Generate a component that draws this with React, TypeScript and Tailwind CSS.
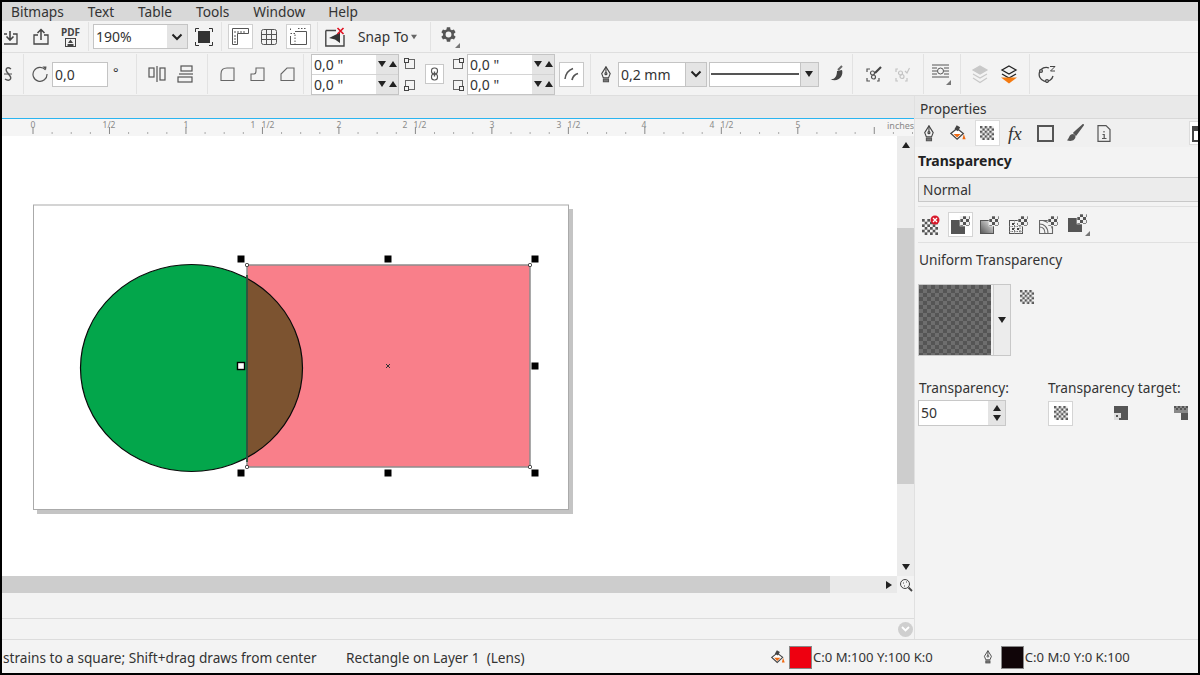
import React from 'react';

const Tri = ({ dir = 'down', size = 8, color = '#222' }: { dir?: 'down' | 'up' | 'right'; size?: number; color?: string }) => {
  const pts = dir === 'down' ? '0,1 8,1 4,7' : dir === 'up' ? '0,7 8,7 4,1' : '1,0 7,4 1,8';
  return (
    <svg width={size} height={size} viewBox="0 0 8 8" className="shrink-0">
      <polygon points={pts} fill={color} />
    </svg>
  );
};

const Chevron = () => (
  <svg width="12" height="8" viewBox="0 0 12 8" className="shrink-0">
    <path d="M1.5 1.5 L6 6 L10.5 1.5" fill="none" stroke="#222" strokeWidth="2" />
  </svg>
);

const Corner = () => (
  <svg width="5" height="5" viewBox="0 0 5 5" className="absolute right-0 bottom-0">
    <polygon points="5,0 5,5 0,5" fill="#777" />
  </svg>
);

const Sep = ({ ml }: { ml: string }) => <div className={`w-px self-stretch my-[1px] bg-[#e2e2e2] shrink-0 ${ml}`} />;

const Pen = ({ size = 18 }: { size?: number }) => (
  <svg width={size * 0.7} height={size} viewBox="0 0 14 20" className="shrink-0" fill="none" stroke="#444" strokeWidth="1.3">
    <path d="M7 1 L12 9 L10 14 H4 L2 9 Z" />
    <path d="M7 1 V8" />
    <circle cx="7" cy="9" r="1.2" />
    <rect x="4" y="15.5" width="6" height="3" fill="#777" stroke="#555" />
  </svg>
);

const Bucket = ({ size = 18 }: { size?: number }) => (
  <svg width={size} height={size} viewBox="0 0 18 18" className="shrink-0">
    <path d="M8 4 L15 9.500 L8 16 L1 9.500 Z" fill="#fff" stroke="#444" strokeWidth="1.4" />
    <path d="M4 10 H12 L8 14 Z" fill="#ef6a12" />
    <rect x="6" y="1" width="4.500" height="5" fill="#444" transform="rotate(30 8 3.500)" />
    <path d="M15.500 10 L17.600 16 H14 Z" fill="#ef6a12" />
  </svg>
);

const Checker = ({ size = 16, id }: { size?: number; id: string }) => (
  <svg width={size} height={size} viewBox="0 0 16 16" className="shrink-0">
    <defs>
      <pattern id={id} width="5.340" height="5.340" patternUnits="userSpaceOnUse">
        <rect width="5.340" height="5.340" fill="#f4f4f4" />
        <rect width="2.670" height="2.670" fill="#555" />
        <rect x="2.670" y="2.670" width="2.670" height="2.670" fill="#555" />
      </pattern>
    </defs>
    <rect width="16" height="16" fill="#666" />
    <rect width="16" height="16" fill={`url(#${id})`} />
  </svg>
);

// small "type of transparency" glyph: a filled block plus a checker corner
const TransType = ({ kind, id }: { kind: 'flat' | 'grad' | 'dots' | 'wave'; id: string }) => (
  <svg width="19" height="18" viewBox="0 0 19 18" className="shrink-0">
    <defs>
      <pattern id={id} width="6" height="6" patternUnits="userSpaceOnUse">
        <rect width="6" height="6" fill="#eee" />
        <rect width="3" height="3" fill="#555" />
        <rect x="3" y="3" width="3" height="3" fill="#555" />
      </pattern>
      <linearGradient id={`${id}-g`} x1="0" y1="1" x2="1" y2="0">
        <stop offset="0" stopColor="#555" />
        <stop offset="1" stopColor="#eee" />
      </linearGradient>
    </defs>
    {kind === 'flat' && <rect x="0" y="4" width="14" height="14" fill="#555" />}
    {kind === 'grad' && <rect x="0.500" y="4.500" width="13" height="13" fill={`url(#${id}-g)`} stroke="#555" />}
    {kind === 'dots' && (
      <g>
        <rect x="0.500" y="4.500" width="13" height="13" fill="#f3f3f3" stroke="#555" />
        <path d="M3 7 h2 v2 h-2z M8 7 h2 v2 h-2z M3 12 h2 v2 h-2z M8 12 h2 v2 h-2z" fill="#444" />
        <path d="M0 10.500 H14 M0 15.500 H14 M5.500 4 V18 M11 4 V18" stroke="#777" strokeWidth="1" strokeDasharray="1.500 1" />
      </g>
    )}
    {kind === 'wave' && (
      <g fill="none" stroke="#666" strokeWidth="1.100">
        <path d="M0.500 17.500 V4.500 H13.500 V17.500 Z" />
        <path d="M0.500 8 C5 8 9 11 9 17.500 M0.500 11 C3.500 11 6 13 6 17.500 M4 4.500 C9 6 13 9 13.500 13" />
      </g>
    )}
    <rect x="9" y="0" width="10" height="10" fill={`url(#${id})`} stroke="#f4f4f4" strokeWidth="0.6" />
  </svg>
);

const SpinPair = ({ ml }: { ml: string }) => (
  <div className={`w-[88px] h-[41px] border border-[#c4c4c4] flex flex-col shrink-0 ${ml}`}>
    {[0, 1].map((i) => (
      <div key={i} className={`flex h-1/2 ${i === 1 ? 'border-t border-[#d4d4d4]' : ''}`}>
        <div className="w-[64px] bg-white pl-[2px] text-[14px] leading-[19px]">0,0 "</div>
        <div className="flex-1 bg-[#e4e4e4] flex items-center justify-center gap-[3px]">
          <Tri dir="down" />
          <Tri dir="up" />
        </div>
      </div>
    ))}
  </div>
);

const SmallCornerBox = ({ pos }: { pos: 'tl' | 'tr' | 'bl' | 'br' }) => {
  const d = { tl: [0.5, 0.5], tr: [7.5, 0.5], bl: [0.5, 7.5], br: [7.5, 7.5] }[pos];
  return (
    <svg width="12" height="12" viewBox="0 0 12 12" className="shrink-0">
      <rect x="1.5" y="1.5" width="9" height="9" fill="none" stroke="#666" />
      <rect x={d[0]} y={d[1]} width="4" height="4" fill="#f3f3f3" stroke="#444" />
    </svg>
  );
};

const Ruler = () => {
  const ticks: number[] = [];
  for (let i = 0; i <= 47; i++) ticks.push(33 + i * 19.12);
  const labels: [string, number][] = [['0', 33], ['1/2', 109], ['1', 186], ['1', 253], ['1/2', 268], ['2', 339], ['2', 405], ['1/2', 420], ['3', 492], ['3', 559], ['1/2', 574], ['4', 644], ['4', 712], ['1/2', 727], ['5', 798]];
  return (
    <svg width="912" height="17" viewBox="2 119 912 17" className="block">
      <rect x="2" y="119" width="912" height="17" fill="#f5f5f5" />
      {ticks.map((x, i) => (
        <line key={i} x1={x} x2={x} y1={i % 4 === 0 ? 127 : 132} y2="134" stroke={i % 4 === 0 ? '#888' : '#aaa'} strokeWidth="1" />
      ))}
      {labels.map(([t, x], i) => (
        <text key={i} x={x} y="128" textAnchor="middle" fontSize="8.5" fill="#8a8a8a" fontFamily="Noto Sans, sans-serif">{t}</text>
      ))}
      <text x="887" y="129" fontSize="9" fill="#8a8a8a" fontFamily="Noto Sans, sans-serif">inches</text>
    </svg>
  );
};

const Drawing = () => {
  const squares: [number, number][] = [[241, 259], [388, 259], [535, 259], [241, 473], [388, 473], [535, 473], [535, 366]];
  const corners: [number, number][] = [[247, 265], [530, 265], [247, 467], [530, 467]];
  return (
    <svg width="895" height="440" viewBox="2 136 895 440" className="block">
      <defs>
        <clipPath id="circ"><ellipse cx="191.5" cy="368" rx="111" ry="103.5" /></clipPath>
      </defs>
      <rect x="37" y="209" width="536" height="305" fill="#c4c4c4" />
      <rect x="33.5" y="205" width="535" height="304.500" fill="#fff" stroke="#aaa" />
      <ellipse cx="191.5" cy="368" rx="111" ry="103.5" fill="#03a64b" />
      <rect x="247" y="265" width="283" height="202" fill="#f97f8a" />
      <rect x="247" y="265" width="283" height="202" fill="#7c5330" clipPath="url(#circ)" />
      <ellipse cx="191.5" cy="368" rx="111" ry="103.5" fill="none" stroke="#0a0a0a" strokeWidth="1.2" />
      <rect x="247" y="265" width="283" height="202" fill="none" stroke="#8d8d8d" strokeWidth="1.5" />
      <line x1="247" x2="247" y1="275" y2="462" stroke="#14462c" strokeWidth="1.5" />
      {squares.map(([x, y], i) => <rect key={i} x={x - 3.5} y={y - 3.5} width="7" height="7" fill="#000" />)}
      <rect x="237.5" y="362.5" width="7" height="7" fill="#fff" stroke="#000" strokeWidth="1.400" />
      {corners.map(([x, y], i) => <rect key={i} x={x - 1.500} y={y - 1.500} width="3" height="3" rx="1" fill="#fff" stroke="#222" />)}
      <path d="M386 364 L390 368 M390 364 L386 368" stroke="#333" strokeWidth="1" />
    </svg>
  );
};

export default function App() {
  return (
    <div className="w-[1200px] h-[675px] overflow-hidden border-2 border-black bg-[#f3f3f3] text-[#333] font-['Noto_Sans',sans-serif] flex flex-col text-[13.7px]">
      {/* Menu */}
      <div className="h-[19px] bg-[#d8d8d8] flex items-center shrink-0 leading-[19px]">
        <span className="ml-[9px]">Bitmaps</span>
        <span className="ml-[24px]">Text</span>
        <span className="ml-[24px]">Table</span>
        <span className="ml-[24px]">Tools</span>
        <span className="ml-[24px]">Window</span>
        <span className="ml-[23px]">Help</span>
      </div>

      {/* Standard toolbar */}
      <div className="h-[32px] flex items-center shrink-0 border-b border-[#dedede]">
        <svg width="15" height="16" viewBox="2 0 15 16" className="ml-[2px] shrink-0" fill="none" stroke="#444" strokeWidth="1.3">
          <path d="M5 5 H1 V15 H15 V5 H11" />
          <path d="M8 2 V11 M4.5 7.5 L8 11 L11.5 7.5" strokeWidth="1.6" />
        </svg>
        <svg width="16" height="17" viewBox="0 0 16 17" className="ml-[14px] shrink-0" fill="none" stroke="#444" strokeWidth="1.3">
          <path d="M5 7 H1 V16 H15 V7 H11" />
          <path d="M8 12 V2 M4.5 5 L8 1.5 L11.5 5" strokeWidth="1.5" />
        </svg>
        <div className="ml-[12px] w-[19px] flex flex-col items-center shrink-0 leading-none">
          <span className="text-[10px] font-bold leading-[10px] text-[#444]">PDF</span>
          <svg width="11" height="9" viewBox="0 0 11 9" className="mt-[1px]">
            <rect x="0.5" y="0.5" width="10" height="8" fill="none" stroke="#444" />
            <path d="M5.5 1.5 L8 5 H3 Z M2.5 6 H8.5 V8 H2.5 Z" fill="#444" />
          </svg>
        </div>
        <Sep ml="ml-[8px]" />
        <div className="ml-[4px] w-[95px] h-[25px] border border-[#c4c4c4] flex shrink-0">
          <div className="w-[73px] bg-white pl-[2px] leading-[23px] text-[14px]">190%</div>
          <div className="flex-1 bg-[#e4e4e4] flex items-center justify-center"><Chevron /></div>
        </div>
        <svg width="18" height="18" viewBox="0 0 18 18" className="ml-[7px] shrink-0">
          <rect x="3" y="3" width="12" height="12" fill="#333" />
          <path d="M0.5 4 V0.5 H4 M14 0.5 H17.5 V4 M17.5 14 V17.5 H14 M4 17.5 H0.5 V14" fill="none" stroke="#333" />
        </svg>
        <Sep ml="ml-[8px]" />
        <div className="ml-[6px] w-[25px] h-[25px] bg-white border border-[#d0d0d0] flex items-center justify-center shrink-0">
          <svg width="17" height="17" viewBox="0 0 17 17" fill="none" stroke="#555">
            <path d="M0.5 0.5 H16.5 V5.5 H5.5 V16.5 H0.5 Z" />
            <path d="M3 3 V5 M6 3 V5 M9 3 V5 M12 3 V5 M2 8 H4 M2 11 H4 M2 14 H4" />
          </svg>
        </div>
        <svg width="16" height="16" viewBox="0 0 16 16" className="ml-[8px] shrink-0" fill="none" stroke="#555">
          <rect x="0.5" y="0.5" width="15" height="15" rx="2" />
          <path d="M5.5 0.5 V15.5 M10.5 0.5 V15.5 M0.5 5.5 H15.5 M0.5 10.5 H15.5" />
        </svg>
        <div className="ml-[9px] w-[25px] h-[25px] bg-white border border-[#d0d0d0] flex items-center justify-center shrink-0">
          <svg width="17" height="17" viewBox="0 0 17 17" fill="none" stroke="#555">
            <path d="M5 3.5 H16.5 V16.5 H0.5 V8" />
            <path d="M5 6.5 V16.5 M0.5 5.5 H5" strokeDasharray="1.5 1.5" />
            <path d="M0.5 0.5 V3 M8 0.5 H16" strokeDasharray="1.5 1.5" />
          </svg>
        </div>
        <Sep ml="ml-[6px]" />
        <svg width="20" height="20" viewBox="0 0 20 20" className="ml-[7px] shrink-0">
          <path d="M0.8 3.5 H11 M0.8 3.5 V19 H19 V8" fill="none" stroke="#444" strokeWidth="1.4" />
          <path d="M4 11 L15 5.5 V16 L10 12.5 Z" fill="#333" />
          <path d="M12.5 1 L18.5 7 M18.5 1 L12.5 7" stroke="#e01020" strokeWidth="1.6" />
        </svg>
        <span className="ml-[13px] mt-[1px] w-[50px] shrink-0 whitespace-nowrap">Snap To</span>
        <span className="ml-[3px] mt-[1px]"><Tri size={6} color="#666" /></span>
        <Sep ml="ml-[13px]" />
        <div className="ml-[10px] w-[19px] h-[22px] relative shrink-0">
          <svg width="15" height="15" viewBox="4 3 18 18" className="absolute left-0 top-[1px]">
            <path fill="#555" d="M19.4 13a7.5 7.5 0 0 0 0-2l2.1-1.6-2-3.5-2.5 1a7.5 7.5 0 0 0-1.7-1L15 3.2h-4l-.4 2.7a7.5 7.5 0 0 0-1.7 1l-2.5-1-2 3.500L6.500 11a7.5 7.5 0 0 0 0 2l-2.100 1.600 2 3.500 2.500-1c.5.4 1.100.7 1.700 1l.4 2.700h4l.4-2.700c.6-.3 1.200-.6 1.700-1l2.500 1 2-3.500zM13 15.500a3.500 3.500 0 1 1 0-7 3.500 3.500 0 0 1 0 7z" />
          </svg>
          <Corner />
        </div>
      </div>

      {/* Property bar */}
      <div className="h-[43px] flex items-center shrink-0 border-b border-[#dedede]">
        <svg width="8" height="16" viewBox="0 0 8 16" className="ml-[2px] shrink-0" fill="none" stroke="#555" strokeWidth="1.4">
          <path d="M7 3 C3 0 1 3 3 6 L6 10 C8 13 5 16 1 13" />
          <path d="M0 8 H8" strokeWidth="1" />
        </svg>
        <Sep ml="ml-[11px]" />
        <svg width="16" height="16" viewBox="0 0 16 16" className="ml-[8px] shrink-0" fill="none" stroke="#555" strokeWidth="1.2">
          <path d="M13.500 4 A7 7 0 1 0 15 8" />
          <path d="M10.500 0.500 L14 4 L14.500 0.500 Z" fill="#555" stroke="none" />
        </svg>
        <div className="ml-[4px] w-[56px] h-[25px] bg-white border border-[#c4c4c4] pl-[2px] leading-[23px] text-[14px] shrink-0">0,0</div>
        <span className="ml-[5px] w-[8px] text-[13px] leading-none mb-[4px] shrink-0">°</span>
        <Sep ml="ml-[15px]" />
        <svg width="18" height="16" viewBox="0 0 18 16" className="ml-[11px] shrink-0" fill="none" stroke="#555" strokeWidth="1.2">
          <path d="M9 0 V16" />
          <rect x="1" y="2" width="5" height="9" />
          <rect x="12" y="2" width="5" height="12" />
        </svg>
        <svg width="18" height="18" viewBox="0 0 18 18" className="ml-[11px] shrink-0" fill="none" stroke="#555" strokeWidth="1.200">
          <path d="M2 9 H16" />
          <rect x="4" y="1" width="11" height="5" />
          <rect x="1" y="12" width="14" height="5" />
        </svg>
        <Sep ml="ml-[12px]" />
        <svg width="15" height="14" viewBox="0 0 15 14" className="ml-[12px] shrink-0" fill="none" stroke="#666" strokeWidth="1.100">
          <path d="M1 13.500 V7 Q1 1 7 1 H14 V13.500 Z" />
        </svg>
        <svg width="15" height="14" viewBox="0 0 15 14" className="ml-[15px] shrink-0" fill="none" stroke="#666" strokeWidth="1.100">
          <path d="M1 13.500 V7 H4 Q6 7 6 4 V1 H14 V13.500 Z" />
        </svg>
        <svg width="15" height="14" viewBox="0 0 15 14" className="ml-[15px] shrink-0" fill="none" stroke="#666" strokeWidth="1.100">
          <path d="M1 13.500 V7 L7 1 H14 V13.500 Z" />
        </svg>
        <Sep ml="ml-[8px]" />
        <SpinPair ml="ml-[7px]" />
        <div className="ml-[5px] flex flex-col gap-[9px] shrink-0">
          <SmallCornerBox pos="tl" />
          <SmallCornerBox pos="bl" />
        </div>
        <div className="ml-[9px] w-[19px] h-[20px] bg-white border border-[#c8c8c8] flex items-center justify-center shrink-0">
          <svg width="9" height="14" viewBox="0 0 9 14" fill="none" stroke="#555" strokeWidth="1.100">
            <rect x="1.500" y="1" width="6" height="6" rx="2.700" />
            <rect x="1.500" y="7" width="6" height="6" rx="2.700" />
            <path d="M4.500 4.500 V9.500" strokeWidth="1.400" />
          </svg>
        </div>
        <div className="ml-[8px] flex flex-col gap-[9px] shrink-0">
          <SmallCornerBox pos="tr" />
          <SmallCornerBox pos="br" />
        </div>
        <SpinPair ml="ml-[3px]" />
        <div className="ml-[4px] w-[25px] h-[25px] bg-white border border-[#c8c8c8] flex items-center justify-center shrink-0">
          <svg width="16" height="14" viewBox="0 0 16 14" fill="none" stroke="#555" strokeWidth="1.500">
            <path d="M1 12 Q2 4 9 1.500" />
            <path d="M8 13 Q9 8 14 6.500" strokeWidth="1.800" />
          </svg>
        </div>
        <Sep ml="ml-[6px]" />
        <span className="ml-[9px] shrink-0 flex"><Pen size={17} /></span>
        <div className="ml-[6px] w-[89px] h-[25px] border border-[#c4c4c4] flex shrink-0">
          <div className="w-[66px] bg-white pl-[2px] leading-[23px] text-[14px]">0,2 mm</div>
          <div className="flex-1 bg-[#e4e4e4] border-l border-[#c4c4c4] flex items-center justify-center"><Chevron /></div>
        </div>
        <div className="ml-[2px] w-[110px] h-[25px] border border-[#c4c4c4] flex shrink-0">
          <div className="w-[90px] bg-white flex items-center px-[1px]"><div className="w-full h-[2px] bg-[#555]" /></div>
          <div className="flex-1 bg-[#e4e4e4] border-l border-[#c4c4c4] flex items-center justify-center"><Tri /></div>
        </div>
        <svg width="15" height="18" viewBox="0 0 15 18" className="ml-[10px] shrink-0">
          <path d="M1 14 C5 15 8 12 8 6 L13 5 C15 11 9 18 1 14 Z" fill="#444" />
          <path d="M9 5 L13 1" stroke="#666" strokeWidth="2" />
        </svg>
        <Sep ml="ml-[8px]" />
        <svg width="17" height="17" viewBox="0 0 17 17" className="ml-[13px] shrink-0" fill="none" stroke="#555" strokeWidth="1.200">
          <path d="M1 6 V3 H4 M1 12 V15 H4 M11 15 H13 V12" />
          <circle cx="6.500" cy="7" r="2" />
          <circle cx="7.500" cy="11" r="2" />
          <path d="M9 7 L15 1" stroke="#444" strokeWidth="2.200" />
        </svg>
        <svg width="15" height="15" viewBox="0 0 15 15" className="ml-[12px] shrink-0" fill="none" stroke="#c4c4c4" strokeWidth="1.200">
          <path d="M1 5 V2 H3 M1 11 V14 H3 M10 14 H12 V11" />
          <circle cx="5.500" cy="6" r="2" />
          <circle cx="7" cy="9.500" r="2" />
          <path d="M10 4 L12 6 L14.500 1" />
        </svg>
        <Sep ml="ml-[13px]" />
        <div className="ml-[8px] w-[19px] h-[22px] relative shrink-0">
          <svg width="17" height="14" viewBox="0 0 17 14" className="absolute left-0 top-[1px]" fill="none" stroke="#555">
            <path d="M0 1 H17 M0 4 H5 M0 7 H5 M0 10 H5 M12 4 H17 M12 7 H17 M12 10 H17 M0 13 H17" />
            <circle cx="8.500" cy="7" r="3" />
          </svg>
          <Corner />
        </div>
        <Sep ml="ml-[9px]" />
        <svg width="18" height="19" viewBox="0 0 18 19" className="ml-[10px] shrink-0" fill="none" stroke="#c8c8c8" strokeWidth="1.200">
          <path d="M9 1 L16 5 L9 9 L2 5 Z" fill="#c8c8c8" />
          <path d="M2 9 L9 13 L16 9 M2 13 L9 17.500 L16 13" />
        </svg>
        <svg width="18" height="19" viewBox="0 0 18 19" className="ml-[11px] shrink-0" fill="none" stroke="#222" strokeWidth="1.300">
          <path d="M9 1 L16 5 L9 9 L2 5 Z" />
          <path d="M2 9 L9 13 L16 9" />
          <path d="M1 12.500 H17 L9 18.500 Z" fill="#f47a10" stroke="none" />
        </svg>
        <Sep ml="ml-[11px]" />
        <svg width="18" height="18" viewBox="0 0 18 18" className="ml-[8px] shrink-0" fill="none" stroke="#444" strokeWidth="1.300">
          <path d="M11 3 A7 7 0 1 0 15 11" />
          <circle cx="3" cy="6" r="1.400" fill="#f3f3f3" />
          <circle cx="9" cy="16" r="1.400" fill="#f3f3f3" />
          <path d="M12 1.500 H17 L12.500 6 H17" strokeWidth="1" />
        </svg>
      </div>

      <div className="flex-1 flex min-h-0">
        {/* Workspace */}
        <div className="w-[912px] flex flex-col shrink-0">
          <div className="h-[22px] bg-[#e9e9e9] shrink-0" />
          <div className="h-px bg-[#2bb5f0] shrink-0" />
          <Ruler />
          <div className="h-[440px] flex shrink-0">
            <div className="w-[895px] bg-white shrink-0"><Drawing /></div>
            <div className="flex-1 bg-[#ececec] flex flex-col items-center">
              <div className="h-[92px] w-full flex justify-center pt-[5px]"><Tri dir="up" /></div>
              <div className="h-[256px] w-full bg-[#cdcdcd]" />
              <div className="flex-1 w-full flex items-end justify-center pb-[5px]"><Tri dir="down" /></div>
            </div>
          </div>
          <div className="h-[17px] flex shrink-0">
            <div className="w-[828px] bg-[#cdcdcd]" />
            <div className="w-[67px] bg-[#e9e9e9] flex items-center justify-end pr-[4px]"><Tri dir="right" /></div>
            <div className="flex-1 flex items-center justify-center">
              <svg width="14" height="14" viewBox="0 0 14 14" fill="none" stroke="#444">
                <circle cx="6" cy="6" r="4.500" />
                <path d="M9.500 9.500 L13 13" strokeWidth="1.800" />
                <path d="M4 5 h1 M7 4 h1 M5 8 h1" />
              </svg>
            </div>
          </div>
          <div className="h-[26px] border-b border-[#dcdcdc] shrink-0" />
          <div className="flex-1 flex items-center justify-end pr-[1px]">
            <div className="w-[15px] h-[15px] rounded-full bg-[#cfcfcf] flex items-center justify-center">
              <svg width="9" height="6" viewBox="0 0 9 6"><path d="M1 1 L4.500 4.500 L8 1" fill="none" stroke="#fff" strokeWidth="1.800" /></svg>
            </div>
          </div>
        </div>

        {/* Properties docker */}
        <div className="flex-1 border-l border-[#e0e0e0] flex flex-col min-w-0">
          <div className="h-[23px] bg-[#e9e9e9] border-b border-[#d8d8d8] pl-[5px] leading-[26px] shrink-0">Properties</div>
          <div className="h-[28px] flex items-center shrink-0 bg-[#f0f0f0] overflow-hidden">
            <span className="ml-[8px] flex"><Pen size={17} /></span>
            <span className="ml-[15px] flex"><Bucket size={16} /></span>
            <div className="ml-[9px] w-[25px] h-[26px] bg-white border border-[#dcdcdc] flex items-center justify-center shrink-0"><Checker size={14} id="c-tab" /></div>
            <span className="ml-[8px] w-[16px] font-['Liberation_Serif',serif] italic text-[19px] leading-none text-[#333] shrink-0">fx</span>
            <div className="ml-[13px] w-[17px] h-[17px] border-2 border-[#555] shrink-0" />
            <svg width="18" height="18" viewBox="0 0 20 20" className="ml-[12px] shrink-0">
              <path d="M19 1 L9 10 L11 12 Z" fill="#555" stroke="#555" strokeWidth="2" strokeLinejoin="round" />
              <path d="M8 11 C3 11 4 16 1 18 C6 20 11 18 10.500 13 Z" fill="#555" />
            </svg>
            <svg width="14" height="17" viewBox="0 0 14 17" className="ml-[13px] shrink-0" fill="none" stroke="#555" strokeWidth="1.200">
              <path d="M1 0.600 H9 L13 4.500 V16.400 H1 Z" />
              <path d="M7 6 V7.500 M5.500 9.500 H7.200 V13.500 M5 13.500 H9.500" />
            </svg>
            <div className="ml-[78px] w-[14px] h-[24px] bg-white border border-[#dcdcdc] pl-[2px] pt-[4px] shrink-0"><div className="w-[12px] h-[16px] border-2 border-t-[5px] border-[#444]" /></div>
          </div>
          <div className="ml-[3px] font-bold leading-[20px] mt-[4px] text-[#222] text-[14px]">Transparency</div>
          <div className="ml-[3px] mt-[6px] h-[25px] bg-[#ececec] border border-[#c8c8c8] border-r-0 pl-[4px] leading-[23px] shrink-0">Normal</div>
          <div className="ml-[3px] mt-[4px] h-[37px] border-y border-[#e0e0e0] flex items-center shrink-0">
            <div className="ml-[4px] w-[18px] h-[20px] relative shrink-0">
              <div className="absolute left-0 top-[4px]"><Checker size={16} id="c-none" /></div>
              <svg width="10" height="10" viewBox="0 0 10 10" className="absolute left-[8px] top-0">
                <circle cx="5" cy="5" r="4.500" fill="#d8192a" />
                <path d="M3 3 L7 7 M7 3 L3 7" stroke="#fff" strokeWidth="1.300" />
              </svg>
            </div>
            <div className="ml-[8px] w-[25px] h-[25px] bg-white border border-[#d4d4d4] flex items-center justify-center shrink-0"><TransType kind="flat" id="t-1" /></div>
            <span className="ml-[7px] flex"><TransType kind="grad" id="t-2" /></span>
            <span className="ml-[10px] flex"><TransType kind="dots" id="t-3" /></span>
            <span className="ml-[11px] flex"><TransType kind="wave" id="t-4" /></span>
            <div className="ml-[10px] w-[22px] h-[22px] relative shrink-0"><TransType kind="flat" id="t-5" /><Corner /></div>
          </div>
          <div className="ml-[4px] mt-[7px] leading-[20px]">Uniform Transparency</div>
          <div className="mt-[14px] ml-[3px] flex items-start shrink-0">
            <div className="w-[93px] h-[72px] border border-[#c8c8c8] flex bg-[#f3f3f3]">
              <div className="w-[72px] h-full bg-[repeating-conic-gradient(#555_0_25%,#6e6e6e_0_50%)] bg-[length:8px_8px]" />
              <div className="ml-[2px] flex-1 bg-[#ececec] border-l border-[#d0d0d0] flex items-center justify-center"><Tri /></div>
            </div>
            <span className="ml-[9px] mt-[6px] flex"><Checker size={14} id="c-small" /></span>
          </div>
          <div className="mt-[22px] flex shrink-0 leading-[20px]">
            <span className="ml-[4px] w-[129px] shrink-0">Transparency:</span>
            <span className="whitespace-nowrap">Transparency target:</span>
          </div>
          <div className="mt-[2px] flex items-center shrink-0">
            <div className="ml-[3px] w-[88px] h-[26px] border border-[#c8c8c8] flex shrink-0">
              <div className="w-[69px] bg-white pl-[2px] leading-[24px] text-[14px]">50</div>
              <div className="flex-1 bg-[#e4e4e4] flex flex-col items-center justify-center gap-[2px]"><Tri dir="up" /><Tri dir="down" /></div>
            </div>
            <div className="ml-[42px] w-[25px] h-[25px] bg-white border border-[#d4d4d4] flex items-center justify-center shrink-0"><Checker size={14} id="c-t1" /></div>
            <svg width="14" height="14" viewBox="0 0 14 14" className="ml-[41px] shrink-0">
              <rect width="14" height="14" fill="#555" />
              <rect x="0" y="7" width="7" height="7" fill="#ddd" />
              <rect x="2" y="9" width="2" height="2" fill="#555" />
              <rect x="5" y="12" width="2" height="2" fill="#555" />
            </svg>
            <svg width="14" height="14" viewBox="0 0 14 14" className="ml-[46px] shrink-0">
              <rect x="0" y="0" width="14" height="7" fill="#888" />
              <rect x="7" y="7" width="7" height="7" fill="#555" />
              <path d="M0 0 h2 v2 h-2z M4 0 h2 v2 h-2z M8 0 h2 v2 h-2z M12 0 h2 v2 h-2z M2 2 h2 v2 h-2z M6 2 h2 v2 h-2z M10 2 h2 v2 h-2z" fill="#555" />
            </svg>
          </div>
        </div>
      </div>

      {/* Status bar */}
      <div className="h-[34px] border-t border-[#dcdcdc] flex items-center shrink-0 whitespace-nowrap text-[#333] text-[13.65px]">
        <span className="ml-[1px] mt-[3px] w-[343px] shrink-0">strains to a square; Shift+drag draws from center</span>
        <span className="mt-[3px] w-[425px] shrink-0 whitespace-pre">Rectangle on Layer 1  (Lens)</span>
        <span className="flex mt-[1px]"><Bucket size={14} /></span>
        <div className="ml-[4px] mt-[1px] w-[23px] h-[23px] bg-[#ee0010] border border-[#888] shrink-0" />
        <span className="ml-[1px] mt-[3px] w-[170px] shrink-0 text-[13.1px]">C:0 M:100 Y:100 K:0</span>
        <span className="flex mt-[1px]"><Pen size={14} /></span>
        <div className="ml-[8px] mt-[1px] w-[23px] h-[23px] bg-[#100508] border border-[#888] shrink-0" />
        <span className="ml-[1px] mt-[3px] text-[13.1px]">C:0 M:0 Y:0 K:100</span>
      </div>
    </div>
  );
}
